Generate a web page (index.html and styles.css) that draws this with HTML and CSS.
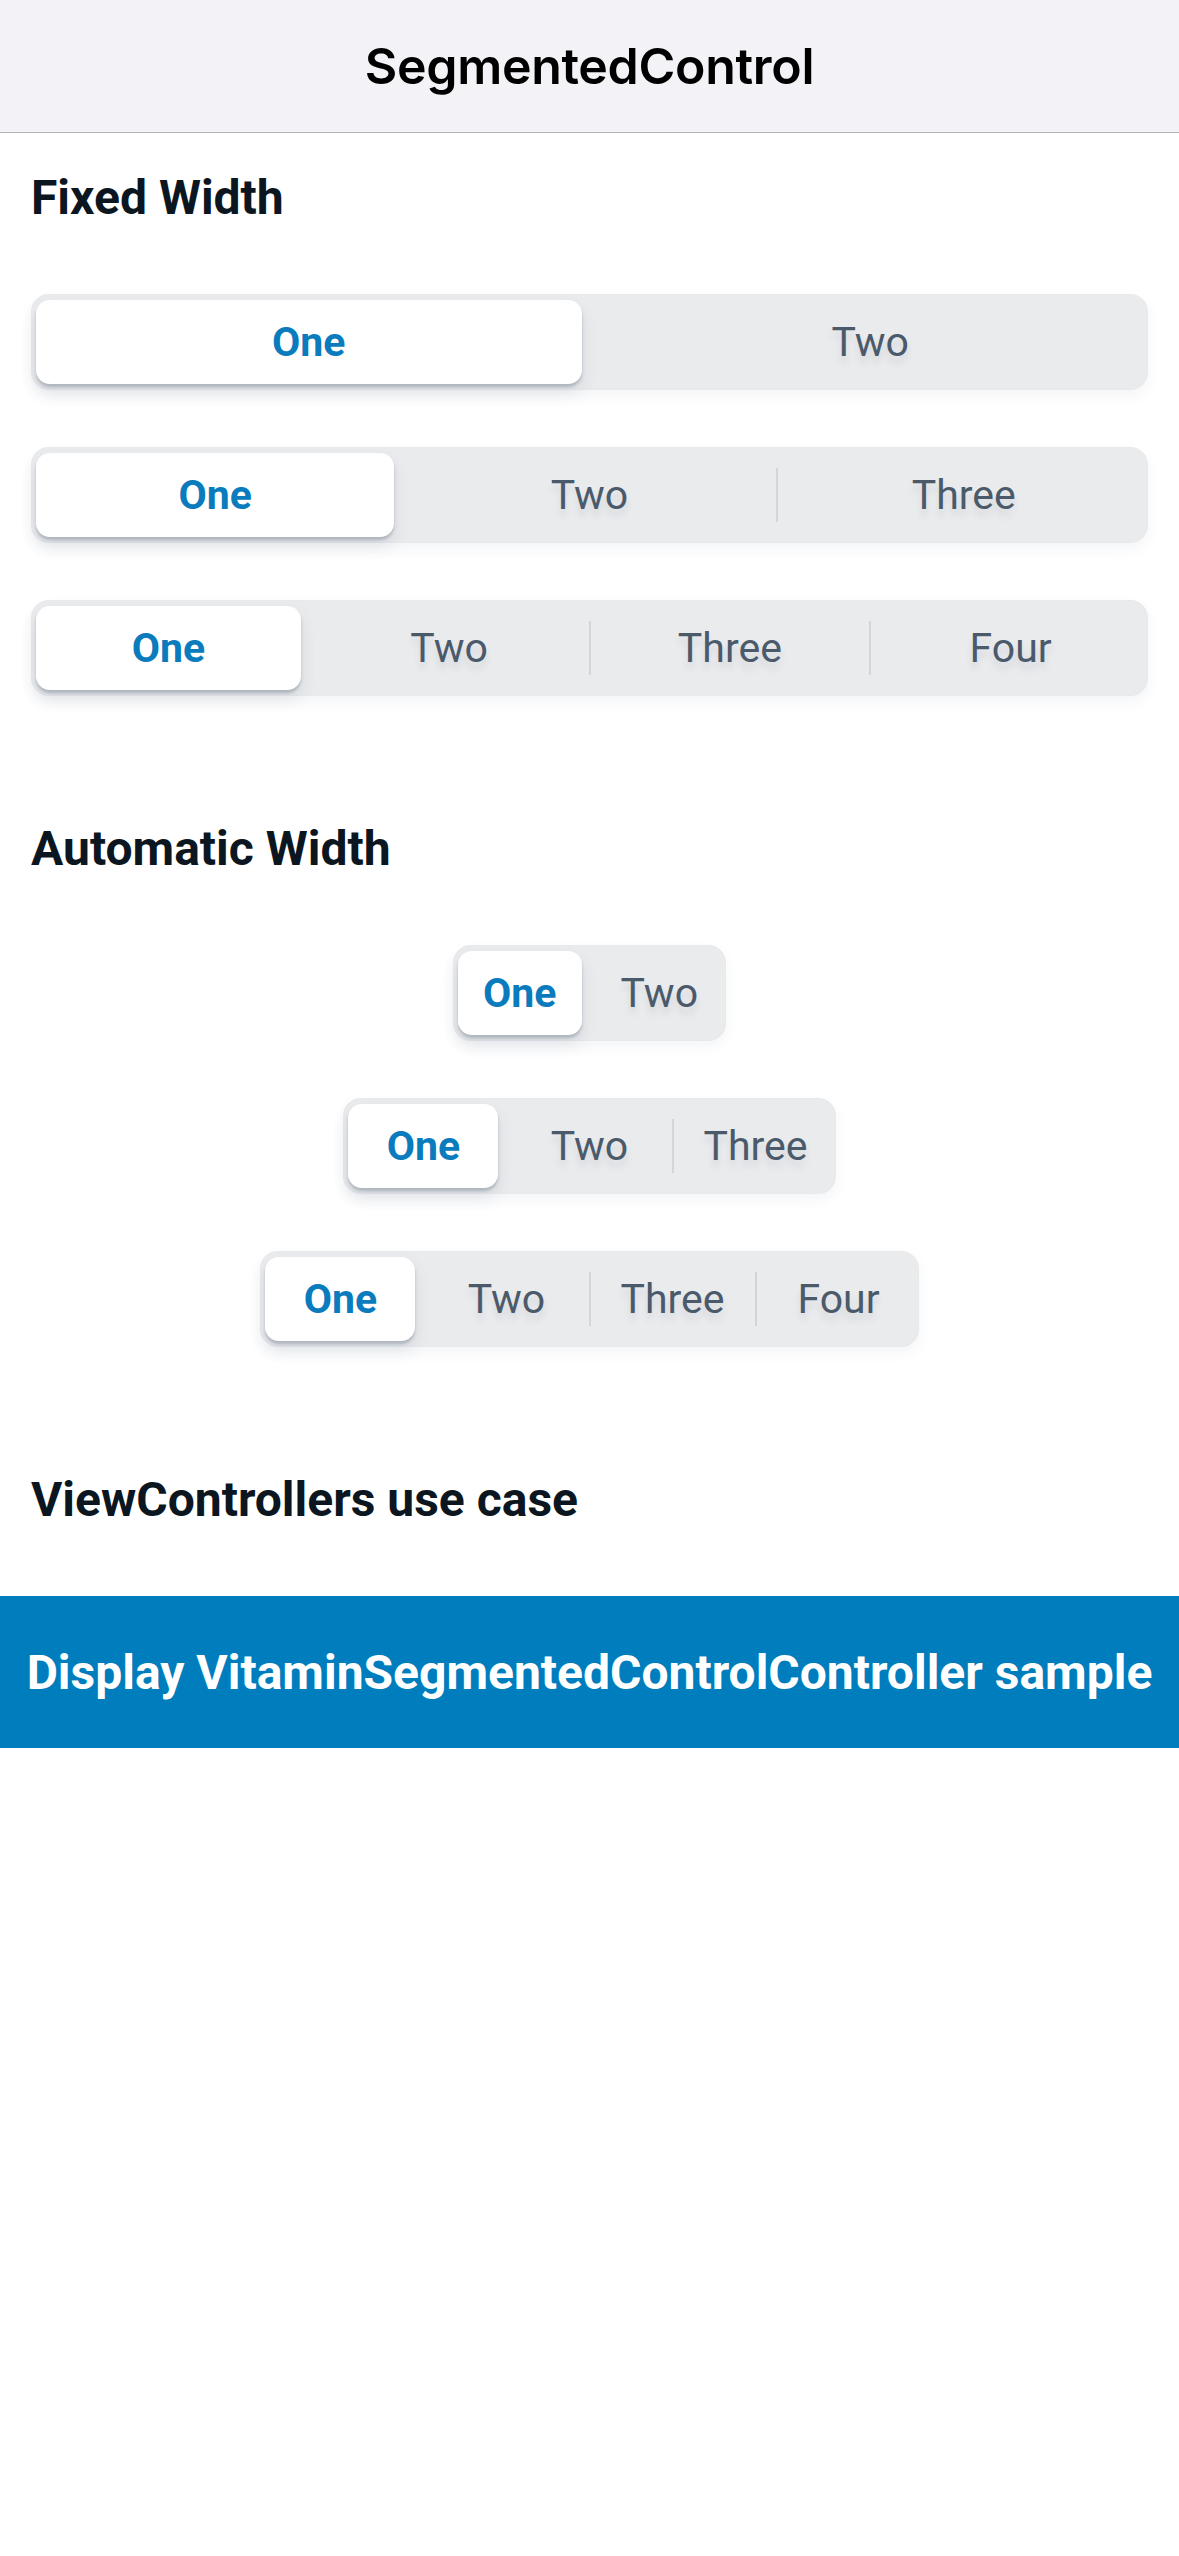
FILE: index.html
```html
<!DOCTYPE html>
<html>
<head>
<meta charset="utf-8">
<link rel="stylesheet" href="styles.css">
</head>
<body>
<header class="navbar"><h1 class="nav-title">SegmentedControl</h1></header>
<main class="content">
  <section class="section">
    <h2 class="section-title">Fixed Width</h2>
    <div class="controls">
      <div class="seg seg-fixed">
        <div class="item selected">One</div>
        <div class="item">Two</div>
      </div>
      <div class="seg seg-fixed">
        <div class="item selected">One</div>
        <div class="item">Two</div>
        <div class="item sep">Three</div>
      </div>
      <div class="seg seg-fixed">
        <div class="item selected">One</div>
        <div class="item">Two</div>
        <div class="item sep">Three</div>
        <div class="item sep">Four</div>
      </div>
    </div>
  </section>
  <section class="section">
    <h2 class="section-title">Automatic Width</h2>
    <div class="controls center">
      <div class="seg seg-auto">
        <div class="item selected">One</div>
        <div class="item">Two</div>
      </div>
      <div class="seg seg-auto">
        <div class="item selected">One</div>
        <div class="item">Two</div>
        <div class="item sep">Three</div>
      </div>
      <div class="seg seg-auto">
        <div class="item selected">One</div>
        <div class="item">Two</div>
        <div class="item sep">Three</div>
        <div class="item sep">Four</div>
      </div>
    </div>
  </section>
  <section class="section">
    <h2 class="section-title">ViewControllers use case</h2>
  </section>
</main>
<button class="cta">Display VitaminSegmentedControlController sample</button>
</body>
</html>
```
FILE: styles.css
```css
html, body {
  margin: 0;
  padding: 0;
  background: #ffffff;
  font-family: Roboto, "Liberation Sans", sans-serif;
}

.navbar {
  height: 132px;
  background: #f2f2f7;
  border-bottom: 1px solid #b4b4b8;
  display: flex;
  align-items: center;
  justify-content: center;
}

.nav-title {
  margin: 0;
  font-family: Inter, Roboto, sans-serif;
  font-weight: 600;
  font-size: 50px;
  line-height: 56px;
  color: #000000;
  letter-spacing: -0.3px;
}

.content {
  padding: 38px 31px 0 31px;
  display: flex;
  flex-direction: column;
  gap: 126px;
}

.section-title {
  margin: 0 0 69px 0;
  font-size: 48px;
  line-height: 54px;
  font-weight: 700;
  color: #0b1620;
}

.controls {
  display: flex;
  flex-direction: column;
  gap: 57px;
}

.controls.center {
  align-items: center;
}

.seg {
  box-sizing: border-box;
  height: 96px;
  padding: 6px 5px;
  gap: 16px;
  border-radius: 18px;
  background: #eaebed;
  grid-auto-flow: column;
  grid-auto-columns: 1fr;
  box-shadow: 0 6px 14px rgba(30, 60, 100, 0.05), inset 0 0 2px rgba(0, 0, 0, 0.04);
}

.seg-fixed {
  display: grid;
  width: 100%;
}

.seg-auto {
  display: inline-grid;
}

.item {
  position: relative;
  height: 84px;
  display: flex;
  align-items: center;
  justify-content: center;
  padding: 0 23px;
  font-size: 41px;
  font-weight: 400;
  color: #4b5a6a;
  text-shadow: 0 7px 7px rgba(60, 80, 110, 0.12);
  white-space: nowrap;
}

.item.selected {
  background: #ffffff;
  border-radius: 14px;
  color: #0a7bbd;
  font-weight: 700;
  text-shadow: none;
  box-shadow: 0 3px 3px rgba(70, 85, 105, 0.28), 0 9px 16px rgba(60, 80, 110, 0.12);
}

.item.sep::before {
  content: "";
  position: absolute;
  left: -9px;
  top: 15px;
  width: 2px;
  height: 54px;
  background: #d3d5d8;
}

.cta {
  display: block;
  width: 100%;
  height: 152px;
  margin-top: 0;
  border: none;
  padding: 0;
  background: #007dbd;
  color: #ffffff;
  font-family: Roboto, "Liberation Sans", sans-serif;
  font-weight: 700;
  font-size: 48px;
  text-align: center;
}
```
